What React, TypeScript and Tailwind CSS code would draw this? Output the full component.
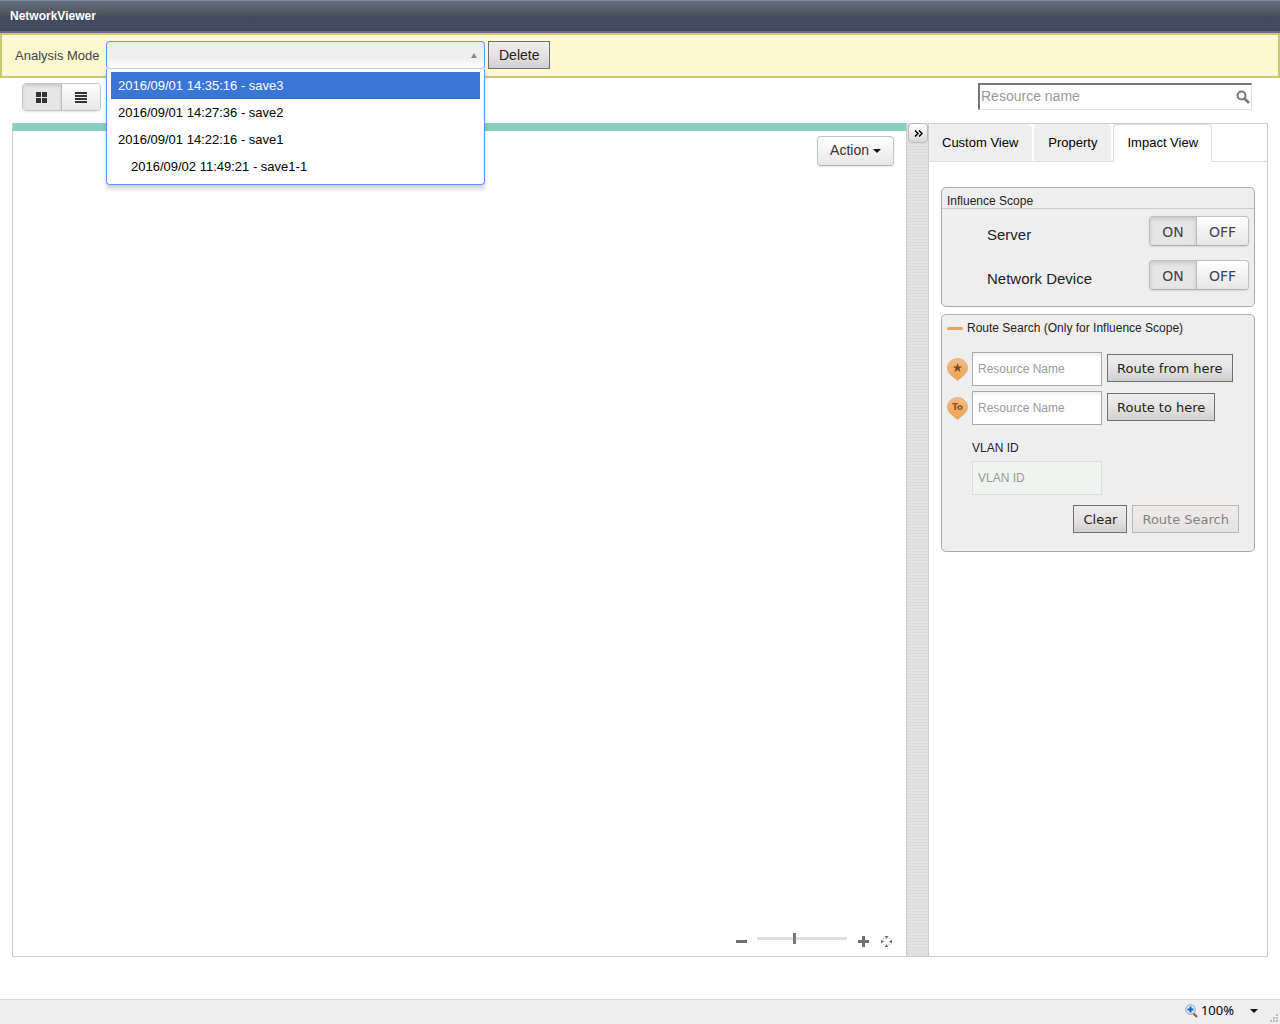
import { useState } from "react";

const saves = [
  { id: "save3", label: "2016/09/01 14:35:16 - save3", child: false },
  { id: "save2", label: "2016/09/01 14:27:36 - save2", child: false },
  { id: "save1", label: "2016/09/01 14:22:16 - save1", child: false },
  { id: "save1-1", label: "2016/09/02 11:49:21 - save1-1", child: true },
];

const tabs = ["Custom View", "Property", "Impact View"];

const flatButton =
  "h-7 border border-[#707070] bg-linear-to-b from-[#ededed] via-[#e6e3e2] to-[#cfcfd2] text-[#222]";

const Header = () => (
  <header className="h-[33px] border-t border-b-2 border-t-[#8089a0] border-b-[#6d7078] bg-[linear-gradient(#666e80,#4b4f58_15px,#434b60_15px,#414a5e)] pl-[10px]">
    <h1 className="font-['Liberation_Sans',sans-serif] text-[12px] leading-[30px] font-bold text-white">
      NetworkViewer
    </h1>
  </header>
);

const AnalysisBar = () => {
  const [mode, setMode] = useState("");
  const [hovered, setHovered] = useState("save3");

  return (
    <div className="flex h-[45px] items-start border-2 border-[#cdc673] bg-[#fcf8cf] pt-[6px] pl-[13px]">
      <label htmlFor="mode" className="w-[91px] text-[13px] leading-[30px] whitespace-nowrap text-[#444]">
        Analysis Mode
      </label>
      <div className="relative w-[379px]">
        <select
          id="mode"
          value={mode}
          onChange={(e) => setMode(e.target.value)}
          className="block h-7 w-full appearance-none rounded-[4px] border border-[#5897fb] border-b-[#b3cffa] bg-[linear-gradient(#eee_60%,#fff)] px-2 text-[13px]"
        >
          <option value=""></option>
          {saves.map((s) => (
            <option key={s.id} value={s.id}>
              {s.label}
            </option>
          ))}
        </select>
        <svg viewBox="0 0 6 5" className="pointer-events-none absolute top-3 right-2 h-[5px] w-[6px]" aria-hidden="true">
          <path d="M3 0L6 5H0z" fill="#888" />
        </svg>
        {/* Open list */}
        <ul
          role="listbox"
          aria-label="Saved analyses"
          className="absolute top-7 left-0 z-10 w-full rounded-b-[4px] border border-t-0 border-[#5897fb] bg-white px-1 pt-[3px] pb-1 shadow-[0_4px_4px_rgba(0,0,0,0.18)]"
        >
          {saves.map((s) => (
            <li
              key={s.id}
              role="option"
              aria-selected={hovered === s.id}
              onMouseEnter={() => setHovered(s.id)}
              onClick={() => setMode(s.id)}
              className={`h-[27px] cursor-pointer text-[13px] leading-[27px] ${s.child ? "pl-5" : "pl-[7px]"} ${
                hovered === s.id ? "bg-[#3875d7] text-white" : "text-black"
              }`}
            >
              {s.label}
            </li>
          ))}
        </ul>
      </div>
      <button type="button" className={`${flatButton} ml-[3px] px-[10px] text-[14px]`}>
        Delete
      </button>
    </div>
  );
};

const Toolbar = () => (
  <div className="flex h-[45px] items-start justify-between pt-[5px] pr-7 pl-[22px]">
    <div className="flex h-7 overflow-hidden rounded-[4px] border border-[#c4c4c4] shadow-[0_1px_2px_rgba(0,0,0,0.1)]">
      <button
        type="button"
        aria-label="Grid view"
        className="flex w-[39px] items-center justify-center border-r border-[#bbb] bg-[#e6e6e6] pr-0.5 shadow-[inset_0_2px_3px_rgba(0,0,0,0.12)]"
      >
        <svg viewBox="0 0 11 11" className="h-[11px] w-[11px]" fill="#333">
          <path d="M0 0h5v5H0zM6 0h5v5H6zM0 6h5v5H0zM6 6h5v5H6z" />
        </svg>
      </button>
      <button
        type="button"
        aria-label="List view"
        className="flex w-[38px] items-center justify-center bg-linear-to-b from-white to-[#e6e6e6]"
      >
        <svg viewBox="0 0 12 11" className="h-[11px] w-3" fill="#333">
          <path d="M0 0h12v2H0zM0 3h12v2H0zM0 6h12v2H0zM0 9h12v2H0z" />
        </svg>
      </button>
    </div>
    <div className="relative">
      <input
        type="text"
        aria-label="Resource name"
        placeholder="Resource name"
        className="block h-[27px] w-[274px] border-t-2 border-r border-b border-l-2 border-t-[#77777b] border-r-[#e3e3e3] border-b-[#e3e3e3] border-l-[#77777b] bg-white pb-0.5 pl-px text-[14px] placeholder:text-[#999]"
      />
      <svg viewBox="0 0 14 14" className="absolute top-[7px] right-0.5 h-[14px] w-[14px]" fill="none" stroke="#777">
        <circle cx="5.500" cy="5.500" r="4" strokeWidth="2" />
        <path d="M8.500 8.500L13 13" strokeWidth="2.600" />
      </svg>
    </div>
  </div>
);

const Canvas = () => (
  <section className="flex min-w-0 flex-1 flex-col justify-between border-b border-l border-[#ccc]">
    <div className="flex justify-end border-t-8 border-[#88cec2] pt-[5px] pr-3">
      <button
        type="button"
        className="flex h-[30px] items-center gap-1 rounded-[4px] border border-[#c4c4c4] border-b-[#b3b3b3] bg-linear-to-b from-white to-[#e8e6e6] px-3 pb-0.5 text-[14px] text-[#333] shadow-[0_1px_2px_rgba(0,0,0,0.1)]"
      >
        Action
        <svg viewBox="0 0 8 4" className="mt-0.5 h-1 w-2" fill="#111">
          <path d="M0 0h8L4 4z" />
        </svg>
      </button>
    </div>
    <div className="flex items-center justify-end pr-[14px] pb-[6px]">
      <button type="button" aria-label="Zoom out">
        <svg viewBox="0 0 11 11" className="h-[11px] w-[11px]" fill="#707070">
          <path d="M0 4h11v3H0z" />
        </svg>
      </button>
      <input
        type="range"
        aria-label="Zoom"
        defaultValue={41}
        className="mr-[11px] mb-[6px] ml-[10px] h-[11px] w-[90px] appearance-none bg-transparent [&::-webkit-slider-runnable-track]:h-[3px] [&::-webkit-slider-runnable-track]:bg-[#ddd] [&::-webkit-slider-thumb]:-mt-1 [&::-webkit-slider-thumb]:h-[11px] [&::-webkit-slider-thumb]:w-[3px] [&::-webkit-slider-thumb]:appearance-none [&::-webkit-slider-thumb]:bg-[#777]"
      />
      <button type="button" aria-label="Zoom in">
        <svg viewBox="0 0 11 11" className="h-[11px] w-[11px]" fill="#707070">
          <path d="M4 0h3v4h4v3H7v4H4V7H0V4h4z" />
        </svg>
      </button>
      <button type="button" aria-label="Fit to screen" className="ml-3">
        <svg viewBox="0 0 11 11" className="h-[11px] w-[11px]" fill="#707070">
          <path d="M3.500 0h4L5.500 3zM3.500 11h4L5.500 8zM0 3.500v4L3 5.500zM11 3.500v4L8 5.500z" />
          <path d="M2 2h1v1H2zM8 2h1v1H8zM2 8h1v1H2zM8 8h1v1H8z" opacity=".6" />
        </svg>
      </button>
    </div>
  </section>
);

const OnOff = ({ name }: { name: string }) => {
  const [on, setOn] = useState(true);
  const base = "h-full pt-0.5 text-[14px]";
  const active = "bg-[#e6e6e6] shadow-[inset_0_2px_4px_rgba(0,0,0,0.15)]";
  const idle = "bg-linear-to-b from-white to-[#e8e6e6]";

  return (
    <div className="flex items-start justify-between pr-[5px] pl-[45px]">
      <span className="pt-[7px] text-[15px] leading-6 text-[#222]">{name}</span>
      <div
        role="group"
        aria-label={name}
        className="flex h-[30px] overflow-hidden rounded-[4px] border border-[#c0c0c0] border-b-[#b0b0b0] font-['DejaVu_Sans',sans-serif] text-[#444] shadow-[0_1px_2px_rgba(0,0,0,0.1)]"
      >
        <button type="button" aria-pressed={on} onClick={() => setOn(true)} className={`${base} w-[47px] border-r border-[#bbb] ${on ? active : idle}`}>
          ON
        </button>
        <button type="button" aria-pressed={!on} onClick={() => setOn(false)} className={`${base} w-[51px] ${on ? idle : active}`}>
          OFF
        </button>
      </div>
    </div>
  );
};

const Pin = ({ kind }: { kind: "from" | "to" }) => (
  <svg viewBox="0 0 21 23" className="h-[23px] w-[21px] shrink-0" aria-hidden="true">
    <defs>
      <linearGradient id={`pin-${kind}`} x1="0" y1="0" x2="0" y2="1">
        <stop offset="0" stopColor="#f3bd83" />
        <stop offset="1" stopColor="#f3a04f" />
      </linearGradient>
    </defs>
    <path
      d="M10.500 .5C16 .5 20.500 4.700 20.500 10C20.500 13.500 18.500 16 16 18L10.500 22.500L5 18C2.500 16 .5 13.500 .5 10C.5 4.700 5 .5 10.500 .5z"
      fill={`url(#pin-${kind})`}
      stroke="#bda58c"
      strokeWidth=".6"
    />
    {kind === "from" ? (
      <path d="M10.500 5l1.200 3.400h3.600l-2.900 2.100 1.100 3.500-3-2.100-3 2.100 1.100-3.500-2.900-2.100h3.600z" fill="#7c4727" />
    ) : (
      <text x="10.500" y="13" textAnchor="middle" fontSize="9" fontWeight="bold" fontFamily="DejaVu Sans, sans-serif" fill="#8c5528">
        To
      </text>
    )}
  </svg>
);

const RouteRow = ({ kind, action }: { kind: "from" | "to"; action: string }) => (
  <div className="flex items-start">
    <div className="pt-[6px] pr-1">
      <Pin kind={kind} />
    </div>
    <input
      type="text"
      aria-label={action}
      placeholder="Resource Name"
      className="mr-[5px] h-[34px] w-[130px] border border-[#aaa] bg-white bg-[linear-gradient(#eee,#fff_5px)] px-[5px] text-[12px] placeholder:text-[#999]"
    />
    <button type="button" className={`${flatButton} mt-0.5 px-[9px] pt-0.5 font-['DejaVu_Sans',sans-serif] text-[13px]`}>
      {action}
    </button>
  </div>
);

const SidePanel = () => {
  const [tab, setTab] = useState("Impact View");

  return (
    <aside className="w-[340px] border border-[#ccc]">
      <div role="tablist" className="flex h-[38px] gap-0.5 border-b border-[#ddd]">
        {tabs.map((t) => (
          <button
            key={t}
            type="button"
            role="tab"
            aria-selected={tab === t}
            onClick={() => setTab(t)}
            className={`rounded-t-[4px] border px-[13px] text-[13px] text-black first:pl-3 ${
              tab === t ? "-mb-px border-b-0 border-[#ddd] bg-white pb-0.5" : "border-[#eee] bg-[#eee]"
            }`}
          >
            {t}
          </button>
        ))}
      </div>

      <div className="flex flex-col gap-[7px] px-3 pt-[25px]">
        <section className="h-[120px] rounded-[5px] border border-[#aaa] bg-[#eee]">
          <h2 className="mb-[7px] h-[21px] border-b border-[#ccc] pl-[5px] text-[12px] leading-[26px] text-[#222]">
            Influence Scope
          </h2>
          <div className="flex flex-col gap-[13px]">
            <OnOff name="Server" />
            <OnOff name="Network Device" />
          </div>
        </section>

        <section className="rounded-[5px] border border-[#aaa] bg-[#eee] pb-[18px] pl-[5px]">
          <h2 className="flex items-center gap-1 pt-1 pb-[15px] text-[12px] leading-[18px] text-[#222]">
            <span className="h-[3px] w-4 rounded-full bg-[#e8a268]"></span>
            Route Search (Only for Influence Scope)
          </h2>
          <div className="flex flex-col gap-[5px]">
            <RouteRow kind="from" action="Route from here" />
            <RouteRow kind="to" action="Route to here" />
          </div>
          <div className="flex flex-col pt-[13px] pl-[25px]">
            <label htmlFor="vlan" className="pb-[3px] text-[12px] leading-5 text-[#222]">
              VLAN ID
            </label>
            <input
              id="vlan"
              type="text"
              disabled
              placeholder="VLAN ID"
              className="h-[34px] w-[130px] border border-[#ddd] bg-[#f0f4f0] px-[5px] text-[12px] placeholder:text-[#999]"
            />
          </div>
          <div className="flex justify-end gap-[5px] pt-[10px] pr-[15px] font-['DejaVu_Sans',sans-serif] text-[13px]">
            <button type="button" className={`${flatButton} px-[9px] pt-0.5`}>
              Clear
            </button>
            <button
              type="button"
              disabled
              className="h-7 border border-[#b5b8bc] bg-linear-to-b from-[#f0ebe9] to-[#e4e4e4] px-[9px] pt-0.5 text-[#838383]"
            >
              Route Search
            </button>
          </div>
        </section>
      </div>
    </aside>
  );
};

const StatusBar = () => (
  <footer className="flex h-[25px] items-center justify-end border-t border-[#d7d7d7] bg-[#eee] pr-0.5 pb-0.5 text-black">
    <svg viewBox="0 0 13 14" className="mr-[3px] h-[14px] w-[13px]" aria-hidden="true">
      <path d="M8 9l4 4" stroke="#8a6238" strokeWidth="2.200" />
      <circle cx="5.500" cy="5.500" r="4.800" fill="#d9ecfa" stroke="#8da0b5" />
      <path d="M5.500 2.500v6M2.500 5.500h6" stroke="#1763c0" strokeWidth="2" />
    </svg>
    <button type="button" className="flex items-center gap-4">
      <span className="font-['Noto_Sans',sans-serif] text-[13px]">100%</span>
      <svg viewBox="0 0 8 4" className="h-1 w-2">
        <path d="M0 0h8L4 4z" fill="#111" />
      </svg>
    </button>
    <svg viewBox="0 0 8 8" className="mt-[14px] ml-3 h-2 w-2" fill="#bbb" aria-hidden="true">
      <path d="M6 0h2v2H6zM3 3h2v2H3zM6 3h2v2H6zM0 6h2v2H0zM3 6h2v2H3zM6 6h2v2H6z" />
    </svg>
  </footer>
);

const App = () => {
  return (
    <div className="flex min-h-screen flex-col bg-white font-['Liberation_Sans',sans-serif]">
      <Header />
      <AnalysisBar />
      <Toolbar />
      <main className="mx-3 mb-[42px] flex flex-1">
        <Canvas />
        {/* Splitter */}
        <div className="w-[22px] border-b border-l border-[#ccc] bg-[repeating-linear-gradient(#e3e3e3_0_2px,#dadada_2px_3px)] pl-px">
          <button
            type="button"
            aria-label="Collapse panel"
            className="flex h-5 w-5 items-center justify-center rounded-[4px] border border-[#bbb] bg-linear-to-b from-white to-[#d8d8d8]"
          >
            <svg viewBox="0 0 9 7" className="h-[7px] w-[9px]" fill="none" stroke="#000" strokeWidth="1.500">
              <path d="M1 .5l3 3-3 3M5 .5l3 3-3 3" />
            </svg>
          </button>
        </div>
        <SidePanel />
      </main>
      <StatusBar />
    </div>
  );
};

export default App;
